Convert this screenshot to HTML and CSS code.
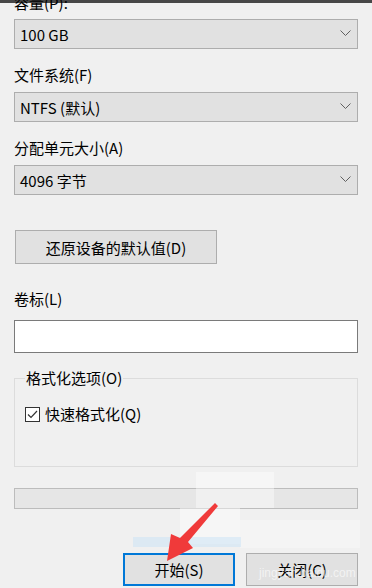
FILE: index.html
```html
<!DOCTYPE html>
<html>
<head>
    <title>格式化</title>
    <link rel="stylesheet" href="styles.css">
</head>
<body>
    <div class="topbar"></div>
    <div class="dialog">
        <div class="label first">容量(P):</div>
        <div class="select"><span>100 GB</span><svg class="chev" width="11" height="6" viewBox="0 0 11 6"><path d="M0.5 0.5 L5.5 5.5 L10.5 0.5" fill="none" stroke="#606060" stroke-width="1"/></svg></div>

        <div class="label">文件系统(F)</div>
        <div class="select"><span>NTFS (默认)</span><svg class="chev" width="11" height="6" viewBox="0 0 11 6"><path d="M0.5 0.5 L5.5 5.5 L10.5 0.5" fill="none" stroke="#606060" stroke-width="1"/></svg></div>

        <div class="label">分配单元大小(A)</div>
        <div class="select"><span>4096 字节</span><svg class="chev" width="11" height="6" viewBox="0 0 11 6"><path d="M0.5 0.5 L5.5 5.5 L10.5 0.5" fill="none" stroke="#606060" stroke-width="1"/></svg></div>

        <button class="btn restore" type="button">还原设备的默认值(D)</button>

        <div class="label volume">卷标(L)</div>
        <div class="textbox"></div>

        <fieldset class="group">
            <legend>格式化选项(O)</legend>
            <label class="check">
                <span class="box"><svg width="13" height="13" viewBox="0 0 13 13"><path d="M2 6.5 L5 9.5 L11 3" fill="none" stroke="#333" stroke-width="1.2"/></svg></span>
                快速格式化(Q)
            </label>
        </fieldset>

        <div class="progress"></div>

        <div class="actions">
            <button class="btn primary" type="button">开始(S)</button>
            <button class="btn" type="button">关闭(C)</button>
        </div>
    </div>

    <!-- watermark + annotation arrow on top of the screenshot -->
    <div class="mark m1"></div>
    <div class="mark m2"></div>
    <div class="mark m3"></div>
    <div class="mark m4"></div>
    <div class="mark-text">jingyan.baidu.com</div>
    <svg class="arrow" width="372" height="588" viewBox="0 0 372 588">
        <path d="M215 503 L218 506 L188 542 L193 548 L167 561 L171 534 L180 538 Z" fill="#f03a3a"/>
    </svg>
</body>
</html>
```

FILE: styles.css
```css
body {
    margin: 0;
    background: #f0f0f0;
    font-family: "Microsoft YaHei UI", "Noto Sans CJK SC", "Noto Sans", sans-serif;
    font-size: 15px;
    color: #000;
    overflow: hidden;
    height: 588px;
}
.topbar {
    height: 3px;
    background: #474747;
}
.dialog {
    padding: 0 14px;
}
.label {
    line-height: 20px;
    height: 20px;
    margin-top: 16px;
    margin-bottom: 7px;
}
.label.first {
    margin-top: -10px;
    margin-bottom: 6px;
}
.select {
    height: 28px;
    border: 1px solid #adadad;
    background: #e1e1e1;
    display: flex;
    align-items: center;
    justify-content: space-between;
    padding: 0 6px 0 5px;
}
.chev {
    margin-top: -2px;
}
.btn {
    font-family: inherit;
    font-size: 15px;
    color: #000;
    background: #e1e1e1;
    border: 1px solid #adadad;
    padding: 0;
    height: 33px;
}
.restore {
    display: block;
    width: 202px;
    height: 34px;
    margin: 35px 0 0 1px;
}
.label.volume {
    margin-top: 25px;
    margin-bottom: 11px;
}
.textbox {
    height: 31px;
    background: #fff;
    border: 1px solid #7a7a7a;
}
.group {
    margin: 15px 0 0;
    padding: 0 8px 0 10px;
    border: 1px solid #dcdcdc;
    height: 97px;
}
.group legend {
    padding: 0 1px;
    line-height: 20px;
}
.check {
    display: flex;
    align-items: center;
    gap: 5px;
    margin-top: 16px;
    line-height: 20px;
}
.box {
    width: 13px;
    height: 13px;
    border: 1px solid #333;
    background: #fff;
    display: flex;
}
.progress {
    margin-top: 21px;
    height: 19px;
    background: #e6e6e6;
    border: 1px solid #bcbcbc;
}
.actions {
    display: flex;
    justify-content: flex-end;
    gap: 11px;
    margin-top: 44px;
}
.actions .btn {
    width: 112px;
}
.btn.primary {
    border: 2px solid #0078d7;
}
.mark {
    position: absolute;
    background: rgba(255, 255, 255, 0.4);
}
.m1 { left: 196px; top: 472px; width: 78px; height: 36px; }
.m2 { left: 180px; top: 508px; width: 60px; height: 36px; }
.m3 { left: 240px; top: 520px; width: 120px; height: 28px; background: rgba(255, 255, 255, 0.25); }
.m4 { left: 133px; top: 537px; width: 108px; height: 10px; background: rgba(200, 225, 245, 0.5); }
.mark-text {
    position: absolute;
    left: 259px;
    top: 565px;
    font-family: "Liberation Sans", sans-serif;
    font-size: 12px;
    line-height: 16px;
    color: rgba(255, 255, 255, 0.6);
}
.arrow {
    position: absolute;
    left: 0;
    top: 0;
}
```
